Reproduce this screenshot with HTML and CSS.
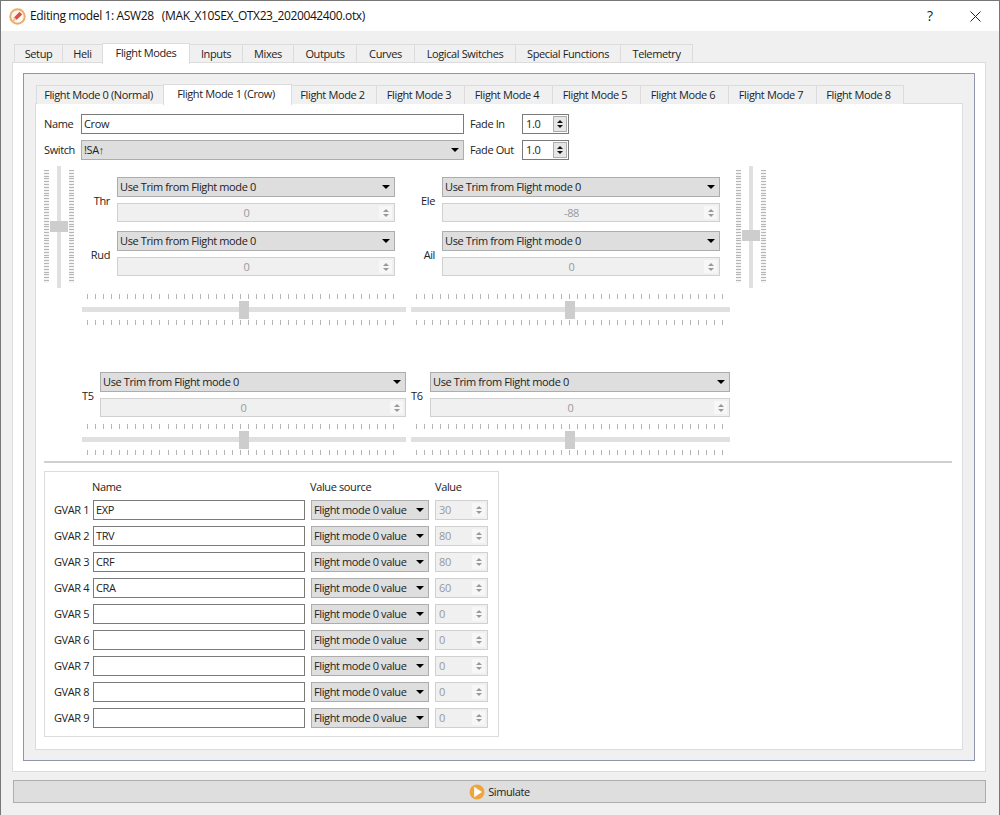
FILE: index.html
```html
<!DOCTYPE html>
<html lang="en">
<head>
<meta charset="utf-8">
<title>Editing model 1: ASW28</title>
<link rel="stylesheet" href="styles.css">
</head>
<body>
<div class="window">
  <header class="titlebar">
    <svg class="app-icon" width="17" height="17" viewBox="0 0 17 17"><circle cx="8.5" cy="8.5" r="7.2" fill="#fdf7ef" stroke="#e9ad6c" stroke-width="2"/><path d="M4.2 12.8l1-3.6 5.4-5.4 2.6 2.6-5.4 5.4z" fill="#d9504a"/><path d="M4.2 12.8l1-3.6 2.6 2.6z" fill="#f3cfa6"/></svg>
    <span class="title">Editing model 1: ASW28&nbsp;&nbsp; (MAK_X10SEX_OTX23_2020042400.otx)</span>
    <span class="help">?</span>
    <svg class="close" width="11" height="11" viewBox="0 0 11 11"><path d="M.5.5l10 10M10.5.5l-10 10" stroke="#222" stroke-width="1" fill="none"/></svg>
  </header>
  <main class="content">
    <nav class="tabs outer-tabs">
      <span class="tab">Setup</span><span class="tab">Heli</span><span class="tab active">Flight Modes</span><span class="tab">Inputs</span><span class="tab">Mixes</span><span class="tab">Outputs</span><span class="tab">Curves</span><span class="tab">Logical Switches</span><span class="tab">Special Functions</span><span class="tab">Telemetry</span>
    </nav>
    <section class="outer-panel">
      <div class="frame">
        <nav class="tabs inner-tabs">
          <span class="tab">Flight Mode 0 (Normal)</span><span class="tab active">Flight Mode 1 (Crow)</span><span class="tab">Flight Mode 2</span><span class="tab">Flight Mode 3</span><span class="tab">Flight Mode 4</span><span class="tab">Flight Mode 5</span><span class="tab">Flight Mode 6</span><span class="tab">Flight Mode 7</span><span class="tab">Flight Mode 8</span>
        </nav>
        <div class="inner-panel">
          <div class="form-row row-name">
            <label class="lbl lbl-first">Name</label>
            <div class="field input wide">Crow</div>
            <label class="lbl lbl-fade">Fade In</label>
            <div class="field fade"><span>1.0</span><i class="steps"><b class="up"></b><b class="down"></b></i></div>
          </div>
          <div class="form-row row-switch">
            <label class="lbl lbl-first">Switch</label>
            <div class="field combo wide"><span>!SA<em class="arrow">↑</em></span><b class="caret"></b></div>
            <label class="lbl lbl-fade">Fade Out</label>
            <div class="field fade"><span>1.0</span><i class="steps"><b class="up"></b><b class="down"></b></i></div>
          </div>

          <div class="trims">
            <div class="vslider"><i class="vticks"></i><i class="vtrack"><b class="vhandle h-left"></b></i><i class="vticks"></i></div>
            <div class="trim-pair first">
              <div class="trim"><label class="trim-lbl">Thr</label><div class="stack"><div class="field combo"><span>Use Trim from Flight mode 0</span><b class="caret"></b></div><div class="field spin off"><span class="val">0</span><i class="steps"><b class="up"></b><b class="down"></b></i></div></div></div>
              <div class="trim"><label class="trim-lbl">Rud</label><div class="stack"><div class="field combo"><span>Use Trim from Flight mode 0</span><b class="caret"></b></div><div class="field spin off"><span class="val">0</span><i class="steps"><b class="up"></b><b class="down"></b></i></div></div></div>
            </div>
            <div class="trim-pair">
              <div class="trim"><label class="trim-lbl">Ele</label><div class="stack"><div class="field combo"><span>Use Trim from Flight mode 0</span><b class="caret"></b></div><div class="field spin off"><span class="val">-88</span><i class="steps"><b class="up"></b><b class="down"></b></i></div></div></div>
              <div class="trim"><label class="trim-lbl">Ail</label><div class="stack"><div class="field combo"><span>Use Trim from Flight mode 0</span><b class="caret"></b></div><div class="field spin off"><span class="val">0</span><i class="steps"><b class="up"></b><b class="down"></b></i></div></div></div>
            </div>
            <div class="vslider right-v"><i class="vticks"></i><i class="vtrack"><b class="vhandle h-right"></b></i><i class="vticks"></i></div>
          </div>

          <div class="sliders sliders-a">
            <div class="hslider s-left"><i class="hticks"></i><i class="htrack"><b class="hhandle"></b></i><i class="hticks"></i></div>
            <div class="hslider s-right"><i class="hticks"></i><i class="htrack"><b class="hhandle"></b></i><i class="hticks"></i></div>
          </div>

          <div class="t-row">
            <div class="t-cell t5"><label class="t-lbl">T5</label><div class="stack"><div class="field combo"><span>Use Trim from Flight mode 0</span><b class="caret"></b></div><div class="field spin off"><span class="val">0</span><i class="steps"><b class="up"></b><b class="down"></b></i></div></div></div>
            <div class="t-cell t6"><label class="t-lbl">T6</label><div class="stack"><div class="field combo"><span>Use Trim from Flight mode 0</span><b class="caret"></b></div><div class="field spin off"><span class="val">0</span><i class="steps"><b class="up"></b><b class="down"></b></i></div></div></div>
          </div>

          <div class="sliders sliders-b">
            <div class="hslider s-left"><i class="hticks"></i><i class="htrack"><b class="hhandle"></b></i><i class="hticks"></i></div>
            <div class="hslider s-right"><i class="hticks"></i><i class="htrack"><b class="hhandle"></b></i><i class="hticks"></i></div>
          </div>

          <hr class="sep">

          <div class="gvars">
            <span class="gh gh-name">Name</span><span class="gh gh-src">Value source</span><span class="gh gh-val">Value</span>
            <label>GVAR 1</label><div class="field input">EXP</div><div class="field combo"><span>Flight mode 0 value</span><b class="caret"></b></div><div class="field gspin off"><span>30</span><i class="steps"><b class="up"></b><b class="down"></b></i></div>
            <label>GVAR 2</label><div class="field input">TRV</div><div class="field combo"><span>Flight mode 0 value</span><b class="caret"></b></div><div class="field gspin off"><span>80</span><i class="steps"><b class="up"></b><b class="down"></b></i></div>
            <label>GVAR 3</label><div class="field input">CRF</div><div class="field combo"><span>Flight mode 0 value</span><b class="caret"></b></div><div class="field gspin off"><span>80</span><i class="steps"><b class="up"></b><b class="down"></b></i></div>
            <label>GVAR 4</label><div class="field input">CRA</div><div class="field combo"><span>Flight mode 0 value</span><b class="caret"></b></div><div class="field gspin off"><span>60</span><i class="steps"><b class="up"></b><b class="down"></b></i></div>
            <label>GVAR 5</label><div class="field input"></div><div class="field combo"><span>Flight mode 0 value</span><b class="caret"></b></div><div class="field gspin off"><span>0</span><i class="steps"><b class="up"></b><b class="down"></b></i></div>
            <label>GVAR 6</label><div class="field input"></div><div class="field combo"><span>Flight mode 0 value</span><b class="caret"></b></div><div class="field gspin off"><span>0</span><i class="steps"><b class="up"></b><b class="down"></b></i></div>
            <label>GVAR 7</label><div class="field input"></div><div class="field combo"><span>Flight mode 0 value</span><b class="caret"></b></div><div class="field gspin off"><span>0</span><i class="steps"><b class="up"></b><b class="down"></b></i></div>
            <label>GVAR 8</label><div class="field input"></div><div class="field combo"><span>Flight mode 0 value</span><b class="caret"></b></div><div class="field gspin off"><span>0</span><i class="steps"><b class="up"></b><b class="down"></b></i></div>
            <label>GVAR 9</label><div class="field input"></div><div class="field combo"><span>Flight mode 0 value</span><b class="caret"></b></div><div class="field gspin off"><span>0</span><i class="steps"><b class="up"></b><b class="down"></b></i></div>
          </div>
        </div>
      </div>
    </section>
    <button class="simulate">
      <svg width="16" height="16" viewBox="0 0 16 16"><circle cx="8" cy="8" r="7.5" fill="#eda53c"/><path d="M5.2 2.8L13 8l-7.8 5.2z" fill="#fff"/></svg>
      <span>Simulate</span>
    </button>
  </main>
</div>
</body>
</html>
```

FILE: styles.css
```css
* { box-sizing: border-box; }
html, body { margin: 0; padding: 0; }
body { width: 1000px; height: 815px; overflow: hidden; font: 11px/14px "Open Sans", "Noto Sans", sans-serif; letter-spacing: -0.38px; color: #222; background: #f0f0f0; white-space: nowrap; }
.window { width: 1000px; height: 815px; border: 1px solid #777; border-bottom: 0; display: flex; flex-direction: column; background: #f0f0f0; }

.titlebar { height: 30px; background: #fff; display: flex; align-items: center; padding-left: 8px; flex: none; }
.app-icon { margin-right: 4px; }
.title { font-size: 12px; flex: 1; color: #111; }
.help { font-size: 14px; width: 43px; margin-left: -1px; }
.close { margin-right: 18px; }

.content { flex: 1; padding: 12px 13px 0 11px; display: flex; flex-direction: column; }

.tabs { display: grid; align-items: end; }
.tab { height: 19px; border: 1px solid #dcdcdc; border-left-width: 0; border-bottom: 0; background: #f0f0f0; display: flex; align-items: center; justify-content: center; }
.tab:first-child { border-left-width: 1px; }
.tab.active { height: 21px; background: #fff; margin-bottom: -1px; position: relative; z-index: 1; padding-bottom: 2px; border-left-width: 1px; margin-left: -1px; }
.outer-tabs { grid-template-columns: 49px 40px 87px 53px 51px 63px 58px 101px 105px 72px; padding-left: 2px; height: 19px; }
.inner-tabs { grid-template-columns: 128px 128px 85px 88px 88px 88px 88px 88px 87px; margin-left: 12px; height: 19px; }
.inner-tabs .tab { padding-right: 3px; }

.outer-panel { background: #fff; border: 1px solid #dcdcdc; height: 710px; padding: 10px; width: 974px; }
.frame { border: 1px solid #8e96a8; background: #f0f0f0; height: 688px; padding-top: 10px; }
.inner-panel { background: #fff; border: 1px solid #dcdcdc; margin: 0 11px; height: 647px; padding: 10px 0 0 8px; }

.field { height: 20px; border: 1px solid #adadad; display: flex; align-items: center; position: relative; }
.input { background: #fff; border: 1px solid #7a7a7a; padding-left: 2px; }
.combo { background: #dedede; border-color: #adadad; padding-left: 2px; justify-content: space-between; padding-right: 4px; }
.caret { width: 0; height: 0; border: 4px solid transparent; border-top: 4px solid #000; border-bottom: 0; }
.arrow { font-style: normal; color: #7a2222; }

.form-row { display: flex; align-items: center; height: 20px; }
.row-switch { margin-top: 6px; }
.lbl-first { width: 37px; }
.wide { width: 383px; flex: none; }
.lbl-fade { width: 52px; margin-left: 6px; }
.fade { width: 47px; background: #fff; border-color: #7a7a7a; padding-left: 3px; }
.fade .steps { right: 1px; top: 1px; bottom: 1px; width: 14px; background: #e6e6e6; border: 1px solid #adadad; }
.fade .up { border-width: 0 3.5px 3.5px; }
.fade .down { border-width: 3.5px 3.5px 0; }

.steps { position: absolute; right: 2px; top: 2px; bottom: 2px; width: 13px; background: #f7f7f7; display: flex; flex-direction: column; align-items: center; justify-content: center; gap: 2px; }
.up, .down { width: 0; height: 0; border: 3px solid transparent; border-top: 0; border-bottom: 3px solid #111; }
.down { border-bottom: 0; border-top: 3px solid #111; }
.off .up { border-bottom-color: #999; }
.off .down { border-top-color: #999; }

.spin, .gspin { background: #f0f0f0; border-color: #d0d0d0; color: #999; height: 19px; }
.val { flex: 1; text-align: center; padding-right: 19px; }

.trims { display: flex; margin-top: 6px; height: 122px; }
.vslider { display: grid; grid-template-columns: 5px 4px 5px; column-gap: 8px; padding-right: 1px; flex: none; width: 31px; height: 122px; }
.vticks { margin: 4px 0 5px; background: repeating-linear-gradient(to bottom, #b5b5b5 0 1px, #f4f4f4 1px 2.82px); }
.vtrack { background: #e0e0e0; position: relative; display: block; }
.vhandle { position: absolute; left: -7px; width: 18px; height: 11px; background: #cdcdcd; }
.h-left { top: 55px; }
.h-right { top: 64px; }
.trim-pair { padding-top: 11px; display: flex; flex-direction: column; gap: 9px; flex: none; width: 320px; }
.trim-pair.first { width: 325px; }
.trim { display: flex; align-items: center; }
.trim-lbl { width: 42px; text-align: right; padding: 2px 7px 0 0; flex: none; }
.stack { flex: 1; display: flex; flex-direction: column; gap: 6px; }
.trim .stack { width: 278px; flex: none; }
.right-v { margin-left: 16px; }

.sliders { display: flex; gap: 5px; margin-left: 38px; }
.sliders-a { margin-top: 6px; }
.sliders-b { margin-top: 7px; }
.hslider { display: flex; flex-direction: column; align-items: stretch; height: 31px; justify-content: space-between; }
.s-left { width: 324px; }
.s-right { width: 319px; }
.hticks { height: 5px; margin: 0 5px; background: repeating-linear-gradient(to right, #b5b5b5 0 1px, transparent 1px 8.05px); }
.htrack { height: 5px; background: #e0e0e0; position: relative; display: block; }
.hhandle { position: absolute; top: -6px; left: 157px; width: 10px; height: 18px; background: #cdcdcd; }
.s-right .hhandle { left: 154px; }

.t-row { display: flex; gap: 5px; margin-left: 38px; margin-top: 47px; }
.t-cell { display: flex; align-items: center; }
.t5 { width: 324px; }
.t6 { width: 319px; }
.t-lbl { width: 18px; flex: none; padding-top: 2px; }
.t6 .t-lbl { width: 19px; }

.sep { border: 0; height: 2px; background: #d0d0d0; margin: 6px 10px 0 0; }

.gvars { width: 455px; height: 266px; margin-top: 8px; border: 1px solid #dcdcdc; display: grid; grid-template-columns: 33px 212px 118px 53px; grid-template-rows: 22px repeat(9, 20px); gap: 6px; padding: 0 9px 0 9px; align-items: center; }
.gh { align-self: end; margin-left: -1px; }
.gh-name { grid-column: 2; }
.gh-src { grid-column: 3; }
.gh-val { grid-column: 4; margin-left: 0; }
.gspin { padding-left: 3px; height: 20px; }

.simulate { margin-top: 8px; width: 973px; height: 23px; background: #dedede; border: 1px solid #adadad; font: inherit; letter-spacing: inherit; color: #222; display: flex; align-items: center; justify-content: center; gap: 3px; padding: 0; margin-left: 1px; }
```
